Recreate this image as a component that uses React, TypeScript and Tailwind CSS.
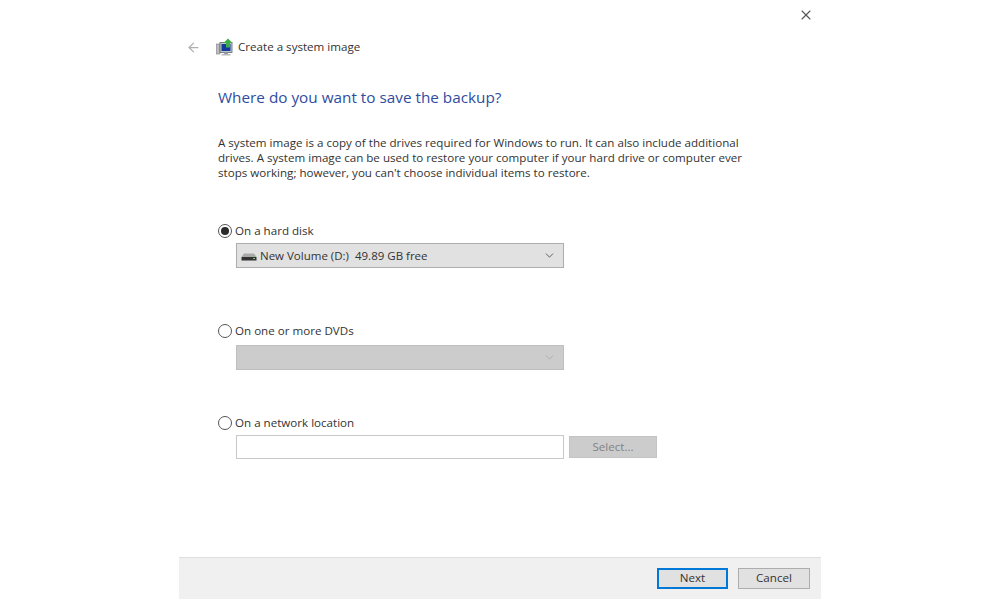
import { ArrowLeft, ChevronDown, X } from 'lucide-react';

const font = { fontFamily: '"Open Sans", "Noto Sans", sans-serif' };

const Radio = ({ checked, label }: { checked?: boolean; label: string }) => (
    <div className="flex items-center h-[16px] gap-[3px]">
        <div className="w-[14px] h-[14px] rounded-full border border-[#555555] bg-white flex items-center justify-center shrink-0">
            {checked && <div className="w-[8px] h-[8px] rounded-full bg-[#2b2b2b]" />}
        </div>
        <span className="text-[11.6px] leading-[16px] text-[#333333]">{label}</span>
    </div>
);

const SystemImageIcon = () => (
    <svg width="18" height="18" viewBox="0 0 18 18" className="shrink-0">
        <rect x="0.5" y="6" width="3.5" height="10" fill="#b9bdc0" stroke="#7d8185" strokeWidth="0.6" />
        <rect x="4" y="4.5" width="12" height="10" fill="#c4c8cc" stroke="#5f6468" strokeWidth="0.8" />
        <rect x="5.5" y="6" width="9" height="7" fill="#12399c" />
        <rect x="8" y="14.5" width="4" height="1.5" fill="#9a9ea2" />
        <rect x="5.5" y="16" width="9" height="1.5" fill="#b5b9bc" />
        <path d="M12 0.5 L16.5 5 L14 5 L14 9.5 L10 9.5 L10 5 L7.5 5 Z" fill="#3fae49" />
    </svg>
);

const DriveIcon = () => (
    <svg width="16" height="8" viewBox="0 0 16 8" className="shrink-0 mt-[3px]">
        <path d="M3 0.5 H13 L15.5 4 H0.5 Z" fill="#a9a9a9" />
        <rect x="0.5" y="4" width="15" height="3.5" fill="#333333" />
        <rect x="12" y="5" width="2" height="1" fill="#7fc97f" />
    </svg>
);

export default function App() {
    return (
        <div className="w-[1000px] h-[600px] bg-white flex justify-center overflow-hidden" style={font}>
            <div className="w-[642px] h-[599px] flex flex-col">
                <div className="flex-1 flex flex-col">
                    <div className="h-[32px] flex justify-end items-start pt-[7px] pr-[7px]">
                        <X className="w-[16px] h-[16px] text-[#555555]" strokeWidth={1.6} />
                    </div>
                    <div className="h-[30px] flex items-center pl-[7px]">
                        <ArrowLeft className="w-[15px] h-[15px] text-[#b0b0b0] mr-[15px]" strokeWidth={2} />
                        <SystemImageIcon />
                        <span className="ml-[4px] text-[11.6px] text-[#333333]">Create a system image</span>
                    </div>
                    <div className="pl-[39px] pt-[23px]">
                        <h1 className="text-[15.3px] leading-[24px] font-normal text-[#2f4da0]">Where do you want to save the backup?</h1>
                        <p className="mt-[26px] text-[11.6px] leading-[15px] text-[#333333] whitespace-nowrap">
                            A system image is a copy of the drives required for Windows to run. It can also include additional
                            <br />
                            drives. A system image can be used to restore your computer if your hard drive or computer ever
                            <br />
                            stops working; however, you can't choose individual items to restore.
                        </p>

                        <div className="mt-[43px]">
                            <Radio checked label="On a hard disk" />
                            <div className="mt-[4px] ml-[18px] w-[328px] h-[25px] bg-[#e1e1e1] border border-[#adadad] flex items-center pl-[4px] pr-[7px]">
                                <DriveIcon />
                                <span className="ml-[3px] text-[11.5px] text-[#333333] whitespace-pre flex-1">New Volume (D:)  49.89 GB free</span>
                                <ChevronDown className="w-[13px] h-[13px] text-[#444444]" strokeWidth={1.5} />
                            </div>
                        </div>

                        <div className="mt-[55px]">
                            <Radio label="On one or more DVDs" />
                            <div className="mt-[6px] ml-[18px] w-[328px] h-[25px] bg-[#cccccc] border border-[#bfbfbf] flex items-center justify-end pr-[7px]">
                                <ChevronDown className="w-[13px] h-[13px] text-[#a8a8a8]" strokeWidth={1.5} />
                            </div>
                        </div>

                        <div className="mt-[45px]">
                            <Radio label="On a network location" />
                            <div className="mt-[4px] ml-[18px] flex items-center gap-[5px]">
                                <div className="w-[328px] h-[24px] bg-white border border-[#c9c9c9]" />
                                <div className="w-[88px] h-[22px] bg-[#cccccc] border border-[#c4c4c4] flex items-center justify-center text-[11.6px] text-[#838383]">Select...</div>
                            </div>
                        </div>
                    </div>
                </div>
                <div className="h-[42px] bg-[#f0f0f0] border-t border-[#dfdfdf] flex items-center justify-end gap-[10px] pr-[11px]">
                    <button className="w-[71px] h-[21px] bg-[#e1e1e1] border-2 border-[#0078d7] text-[11.6px] text-[#333333] flex items-center justify-center pb-[1px]">Next</button>
                    <button className="w-[72px] h-[21px] bg-[#e1e1e1] border border-[#adadad] text-[11.6px] text-[#333333] flex items-center justify-center pb-[1px]">Cancel</button>
                </div>
            </div>
        </div>
    );
}
